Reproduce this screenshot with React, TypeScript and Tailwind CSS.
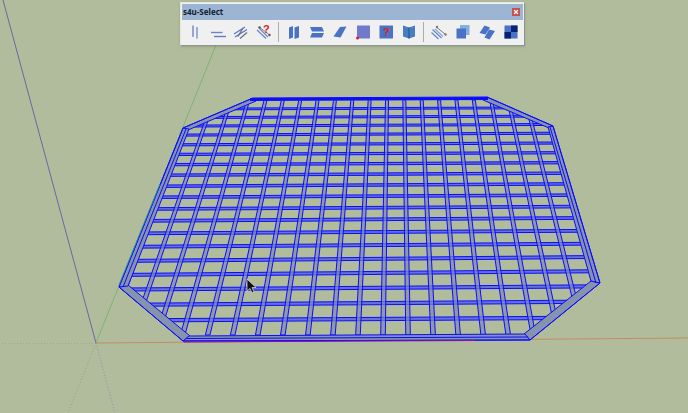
import type { ReactNode } from 'react';
import { X } from 'lucide-react';

interface Tool {
  name: string;
  icon: ReactNode;
}

// One bar of the grate runs between a far and a near point
const columns = Array.from({ length: 21 }, (_, i) => {
  const n = i - 11;
  return { far: 387 + 17.35 * n, near: 383 + 25.05 * n };
});

const rows = [
  [109, 108], [117.5, 116.3], [126, 124.7], [135, 133.5], [144.7, 143.3], [154.3, 153],
  [164.5, 163], [175, 173.5], [186, 184.3], [197, 195.5], [208.7, 207], [220.5, 218.5],
  [233, 231.3], [246.3, 244.3], [260.3, 257.8], [274.3, 272], [289, 287], [304.3, 302.3],
  [320, 318.3],
];

const outline = '119,287 183,128 253,98 487,97 553,126 600,283 530,340 183,341';
const inner = '128,286 189,129 253,101 486,100 548,127 591,282 525,335 189,336';

const corners = [
  '119,287 183,341 190,336 128,285',
  '600,283 530,340 524,334 591,281',
  '183,128 253,98 256,101 188,130',
  '487,97 553,126 549,128 483,100',
  '119,287 183,128 189,129 128,286',
  '600,283 553,126 548,127 591,281',
  '183,341 530,340 525,334 189,336',
];

const edgeTools: Tool[] = [
  {
    name: 'Select vertical edges',
    icon: (
      <g strokeWidth="1.4">
        <path d="M7 2.5V14" stroke="#7681c4" />
        <path d="M11 4V15.5" stroke="#6f95cf" />
      </g>
    ),
  },
  {
    name: 'Select horizontal edges',
    icon: (
      <g strokeWidth="1.4">
        <path d="M2 9.5H13.5" stroke="#7681c4" />
        <path d="M5 13.5H17" stroke="#6479c8" />
      </g>
    ),
  },
  {
    name: 'Select parallel edges',
    icon: (
      <g strokeWidth="1.3">
        <path d="M2 11 13 4M3 14 15 6.5" stroke="#5878c8" />
        <path d="M8 15.5 15 9.5M6 13.5 11 5" stroke="#6d7184" />
      </g>
    ),
  },
  {
    name: 'Select edges by length',
    icon: (
      <>
        <path d="M2 7 11 15.5M4.5 5.5 13 14" stroke="#6585cf" strokeWidth="1.2" />
        <path d="M5 4.5 14 11.5" stroke="#888" />
        <circle cx="4.5" cy="4.5" r="1.2" fill="#555" />
        <circle cx="14.500" cy="12" r="1.2" fill="#555" />
        <text x="8" y="10" fontSize="11" fontWeight="700" fill="#e02020">?</text>
      </>
    ),
  },
];

const faceTools: Tool[] = [
  {
    name: 'Select vertical faces',
    icon: <path d="M4 4.5 8 3V14.5L4 16ZM9.500 4.5 14 3V14.5L9.500 16Z" fill="#4a73c5" />,
  },
  {
    name: 'Select horizontal faces',
    icon: <path d="M2 4H14L16 8.5H4ZM4 10H16L14 14.5H2Z" fill="#4a73c5" />,
  },
  {
    name: 'Select parallel faces',
    icon: <path d="M2.5 13.5 9 4 15.5 3.500 9.500 14.5Z" fill="#4a73c5" />,
  },
  {
    name: 'Select faces by vertex',
    icon: (
      <>
        <path d="M3 2.5H16V15.5H3Z" fill="#7179c9" />
        <circle cx="3.5" cy="15" r="1.5" fill="#ea1c24" />
      </>
    ),
  },
  {
    name: 'Select faces by area',
    icon: (
      <>
        <path d="M2.5 2.5H16V15.5H2.5Z" fill="#4a73c5" />
        <text x="6" y="13" fontSize="11" fontWeight="700" fill="#e02020">?</text>
      </>
    ),
  },
  {
    name: 'Select adjoining faces',
    icon: (
      <>
        <path d="M3 2.5 9 4.5V15.5L3 13.5ZM15 2.5 9 4.5V15.5L15 13.5Z" fill="#4a7cc5" />
        <path d="M9 4.5V15.5" stroke="#1c6484" strokeWidth="1.3" />
      </>
    ),
  },
];

const groupTools: Tool[] = [
  {
    name: 'Select similar edges',
    icon: (
      <>
        <path d="M1.5 9.5 8.5 16M2.5 6.5 11.500 15" stroke="#6585cf" strokeWidth="1.2" />
        <path d="M5 6 13 13.5" stroke="#8da3d8" strokeWidth="1.2" />
        <path d="M7 4.500 15.5 11.500" stroke="#777" />
        <circle cx="7" cy="4" r="1.2" fill="#777" />
        <circle cx="15.500" cy="11.500" r="1.2" fill="#777" />
      </>
    ),
  },
  {
    name: 'Select copies',
    icon: (
      <>
        <path d="M6 2H15.5V12H6Z" fill="#84b0df" />
        <path d="M2.5 5.5H12V15.5H2.5Z" fill="#4a73c5" />
      </>
    ),
  },
  {
    name: 'Select similar faces',
    icon: (
      <path d="M1.5 10 6.5 2.500 12 4.500 7.500 11.500ZM6.500 14.500 11 6.500 17 8 11.500 16.500Z" fill="#4a73c5" />
    ),
  },
  {
    name: 'Select by material',
    icon: (
      <>
        <path d="M2.5 2.5H15.5V15.5H2.5Z" fill="#4a73c5" />
        <path d="M9 2.5H15.5V9H9ZM2.5 9H9V15.5H2.5Z" fill="#062271" />
      </>
    ),
  },
];

function ToolButton({ tool, wide = false }: { tool: Tool; wide?: boolean }) {
  return (
    <button
      type="button"
      aria-label={tool.name}
      className={`flex h-6 items-center justify-center hover:bg-blue-100 ${wide ? 'w-6' : 'w-[23px]'}`}
    >
      <svg viewBox="0 0 18 18" className="size-[18px] overflow-visible" fill="none">
        {tool.icon}
      </svg>
    </button>
  );
}

function Separator() {
  return (
    <div className="flex w-[7px] justify-center">
      <div className="h-5 w-px bg-[#a9adad]" />
    </div>
  );
}

function Toolbar() {
  return (
    <div className="absolute top-[2px] left-[180px] border border-[#e4e7e3] border-r-[#8d9390] border-b-[#8d9390] bg-[#f0f0f0] p-px shadow-sm">
      <div className="flex h-4 items-center justify-between bg-[#9bb5d3] pr-[3px] pl-px">
        <h1 className="font-['Noto_Sans',sans-serif] text-[8px] font-bold text-[#101c30]">s4u-Select</h1>
        <button
          type="button"
          aria-label="Close"
          className="flex size-2 items-center justify-center bg-[#c9504d] text-white"
        >
          <X className="size-[6px]" strokeWidth={5} />
        </button>
      </div>
      <div className="flex items-center pl-px">
        {edgeTools.map((tool) => <ToolButton key={tool.name} tool={tool} />)}
        <Separator />
        {faceTools.map((tool) => <ToolButton key={tool.name} tool={tool} />)}
        <Separator />
        {groupTools.map((tool) => <ToolButton key={tool.name} tool={tool} wide />)}
      </div>
    </div>
  );
}

function Scene() {
  return (
    <svg
      viewBox="0 0 688 413"
      preserveAspectRatio="xMidYMid slice"
      className="block h-screen w-full"
      role="img"
      aria-label="Selected grate model"
    >
      <defs>
        <clipPath id="grate">
          <polygon points={inner} />
        </clipPath>
      </defs>

      {/* Axes */}
      <path d="M3 0 96 343" stroke="#6669a5" />
      <path d="M218 40 96 343" stroke="#7fb277" />
      <path d="M96 343 688 338" stroke="#c38d62" />
      <g strokeDasharray="1 2">
        <path d="M2 343.5H96" stroke="#bb9c7c" />
        <path d="M96 343 68 413" stroke="#88a777" />
        <path d="M96 343 115 413" stroke="#8d91a5" />
      </g>

      <g clipPath="url(#grate)" stroke="#0c0cff">
        {rows.map(([left, right], i) => {
          const half = 0.9 + i * 0.04;
          const slope = (left - right) / 300;
          const start = left + slope * 90;
          const end = right - slope * 110;
          return (
            <polygon
              key={left}
              points={`110,${start - half} 610,${end - half} 610,${end + half} 110,${start + half}`}
              fill="#6672d8"
            />
          );
        })}
        {columns.map(({ far, near }) => (
          <polygon
            key={far}
            points={`${far - 1.5},100 ${far + 1.5},100 ${near + 2.3},335 ${near - 2.3},335`}
            fill="#7f8cb4"
            fillOpacity="0.7"
          />
        ))}
      </g>

      <g stroke="#0c0cff" strokeLinejoin="round">
        {corners.map((points) => (
          <polygon key={points} points={points} fill="#8593ac" />
        ))}
        <polygon points={outline} fill="none" />
        <path d="M123 287 186 129M596 283 550 127M186 338.5 528 337" fill="none" />
        <path d="M250 99.5 488 98.5" strokeWidth="3" />
      </g>
      <path d="M119 285 160 184" stroke="#258f9e" />
      <path d="M184 342 475 340.5" stroke="#8c10a8" />

      {/* Cursor */}
      <path
        d="M247 279V291L250 288.5 252 293 254 292 252 287.5H256Z"
        fill="#111"
        stroke="#e8e8e8"
        strokeWidth="0.7"
      />
    </svg>
  );
}

export default function App() {
  return (
    <main className="relative min-h-screen overflow-hidden bg-[#b1bc9c] font-['Liberation_Sans',sans-serif]">
      <Scene />
      <Toolbar />
    </main>
  );
}
